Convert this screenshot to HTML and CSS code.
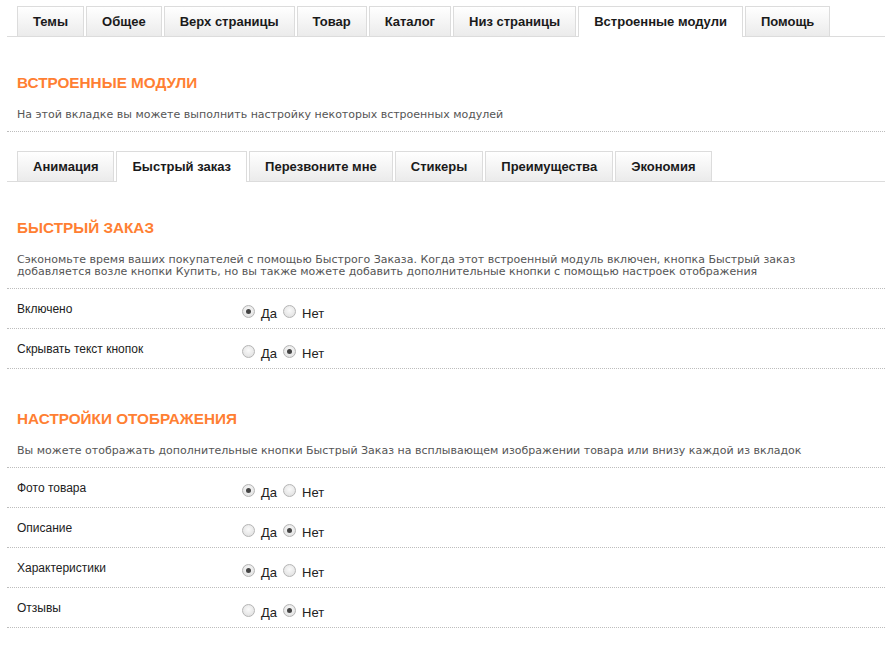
FILE: index.html
```html
<!DOCTYPE html>
<html lang="ru">
<head>
<meta charset="utf-8">
<title>Встроенные модули</title>
<link rel="stylesheet" href="styles.css">
</head>
<body>
<div class="page">
  <ul class="tabs">
    <li class="tab">Темы</li>
    <li class="tab">Общее</li>
    <li class="tab">Верх страницы</li>
    <li class="tab">Товар</li>
    <li class="tab">Каталог</li>
    <li class="tab">Низ страницы</li>
    <li class="tab active">Встроенные модули</li>
    <li class="tab">Помощь</li>
  </ul>

  <h2 class="title first">ВСТРОЕННЫЕ МОДУЛИ</h2>
  <p class="desc">На этой вкладке вы можете выполнить настройку некоторых встроенных модулей</p>

  <ul class="tabs sub">
    <li class="tab">Анимация</li>
    <li class="tab active">Быстрый заказ</li>
    <li class="tab">Перезвоните мне</li>
    <li class="tab">Стикеры</li>
    <li class="tab">Преимущества</li>
    <li class="tab">Экономия</li>
  </ul>

  <h2 class="title first">БЫСТРЫЙ ЗАКАЗ</h2>
  <p class="desc">Сэкономьте время ваших покупателей с помощью Быстрого Заказа. Когда этот встроенный модуль включен, кнопка Быстрый заказ добавляется возле кнопки Купить, но вы также можете добавить дополнительные кнопки с помощью настроек отображения</p>
  <div class="row">
    <span class="label">Включено</span>
    <span class="options">
      <label class="opt"><input type="radio" name="r1" checked><span>Да</span></label>
      <label class="opt"><input type="radio" name="r1"><span>Нет</span></label>
    </span>
  </div>
  <div class="row">
    <span class="label">Скрывать текст кнопок</span>
    <span class="options">
      <label class="opt"><input type="radio" name="r2"><span>Да</span></label>
      <label class="opt"><input type="radio" name="r2" checked><span>Нет</span></label>
    </span>
  </div>

  <h2 class="title second">НАСТРОЙКИ ОТОБРАЖЕНИЯ</h2>
  <p class="desc">Вы можете отображать дополнительные кнопки Быстрый Заказ на всплывающем изображении товара или внизу каждой из вкладок</p>
  <div class="row">
    <span class="label">Фото товара</span>
    <span class="options">
      <label class="opt"><input type="radio" name="r3" checked><span>Да</span></label>
      <label class="opt"><input type="radio" name="r3"><span>Нет</span></label>
    </span>
  </div>
  <div class="row">
    <span class="label">Описание</span>
    <span class="options">
      <label class="opt"><input type="radio" name="r4"><span>Да</span></label>
      <label class="opt"><input type="radio" name="r4" checked><span>Нет</span></label>
    </span>
  </div>
  <div class="row">
    <span class="label">Характеристики</span>
    <span class="options">
      <label class="opt"><input type="radio" name="r5" checked><span>Да</span></label>
      <label class="opt"><input type="radio" name="r5"><span>Нет</span></label>
    </span>
  </div>
  <div class="row">
    <span class="label">Отзывы</span>
    <span class="options">
      <label class="opt"><input type="radio" name="r6"><span>Да</span></label>
      <label class="opt"><input type="radio" name="r6" checked><span>Нет</span></label>
    </span>
  </div>
</div>
</body>
</html>
```

FILE: styles.css
```css
* { box-sizing: border-box; }

html, body {
  margin: 0;
  padding: 0;
  background: #fff;
}

body {
  font-family: "Liberation Sans", Arial, sans-serif;
  color: #222;
}

.page {
  margin: 0 8px 0 7px;
  padding-top: 6px;
}

.tabs {
  list-style: none;
  margin: 0;
  padding: 0 0 0 10px;
  display: flex;
  gap: 2px;
  border-bottom: 1px solid #dcdcdc;
}

.tabs.sub {
  margin-top: 19px;
}

.tab {
  height: 30px;
  line-height: 30px;
  padding: 0 15px;
  border: 1px solid #dcdcdc;
  border-bottom: none;
  background: linear-gradient(#ffffff, #ebebeb);
  font-size: 13px;
  font-weight: bold;
  color: #1a1a1a;
  white-space: nowrap;
}

.tab.active {
  background: #fff;
  height: 31px;
  margin-bottom: -1px;
}

.title {
  margin: 0;
  padding-left: 10px;
  font-size: 15.3px;
  line-height: 18px;
  font-weight: bold;
  color: #ff7f33;
}

.title.first {
  margin-top: 37px;
}

.title.second {
  margin-top: 41px;
}

.desc {
  margin: 17px 0 0;
  padding: 0 60px 10px 10px;
  font-family: "DejaVu Sans", Verdana, sans-serif;
  font-size: 11px;
  line-height: 12px;
  color: #555;
  border-bottom: 1px dotted #bdbdbd;
}

.row {
  display: flex;
  align-items: flex-start;
  height: 40px;
  padding: 13px 0 0 10px;
  border-bottom: 1px dotted #bdbdbd;
}

.label {
  width: 225px;
  font-size: 12px;
  line-height: 14px;
  color: #222;
}

.options {
  display: flex;
  align-items: center;
  gap: 6px;
  padding-top: 2px;
}

.opt {
  display: flex;
  align-items: center;
  font-size: 13px;
  color: #222;
}

.opt span {
  margin-left: 6px;
  position: relative;
  top: 2px;
}

.opt input {
  appearance: none;
  -webkit-appearance: none;
  margin: 0;
  width: 13px;
  height: 13px;
  border-radius: 50%;
  border: 1px solid #b5b5b5;
  background: radial-gradient(circle at 50% 40%, #fafafa, #dcdcdc);
  position: relative;
}

.opt input:checked::after {
  content: "";
  position: absolute;
  left: 3px;
  top: 3px;
  width: 5px;
  height: 5px;
  border-radius: 50%;
  background: #444;
}
```
